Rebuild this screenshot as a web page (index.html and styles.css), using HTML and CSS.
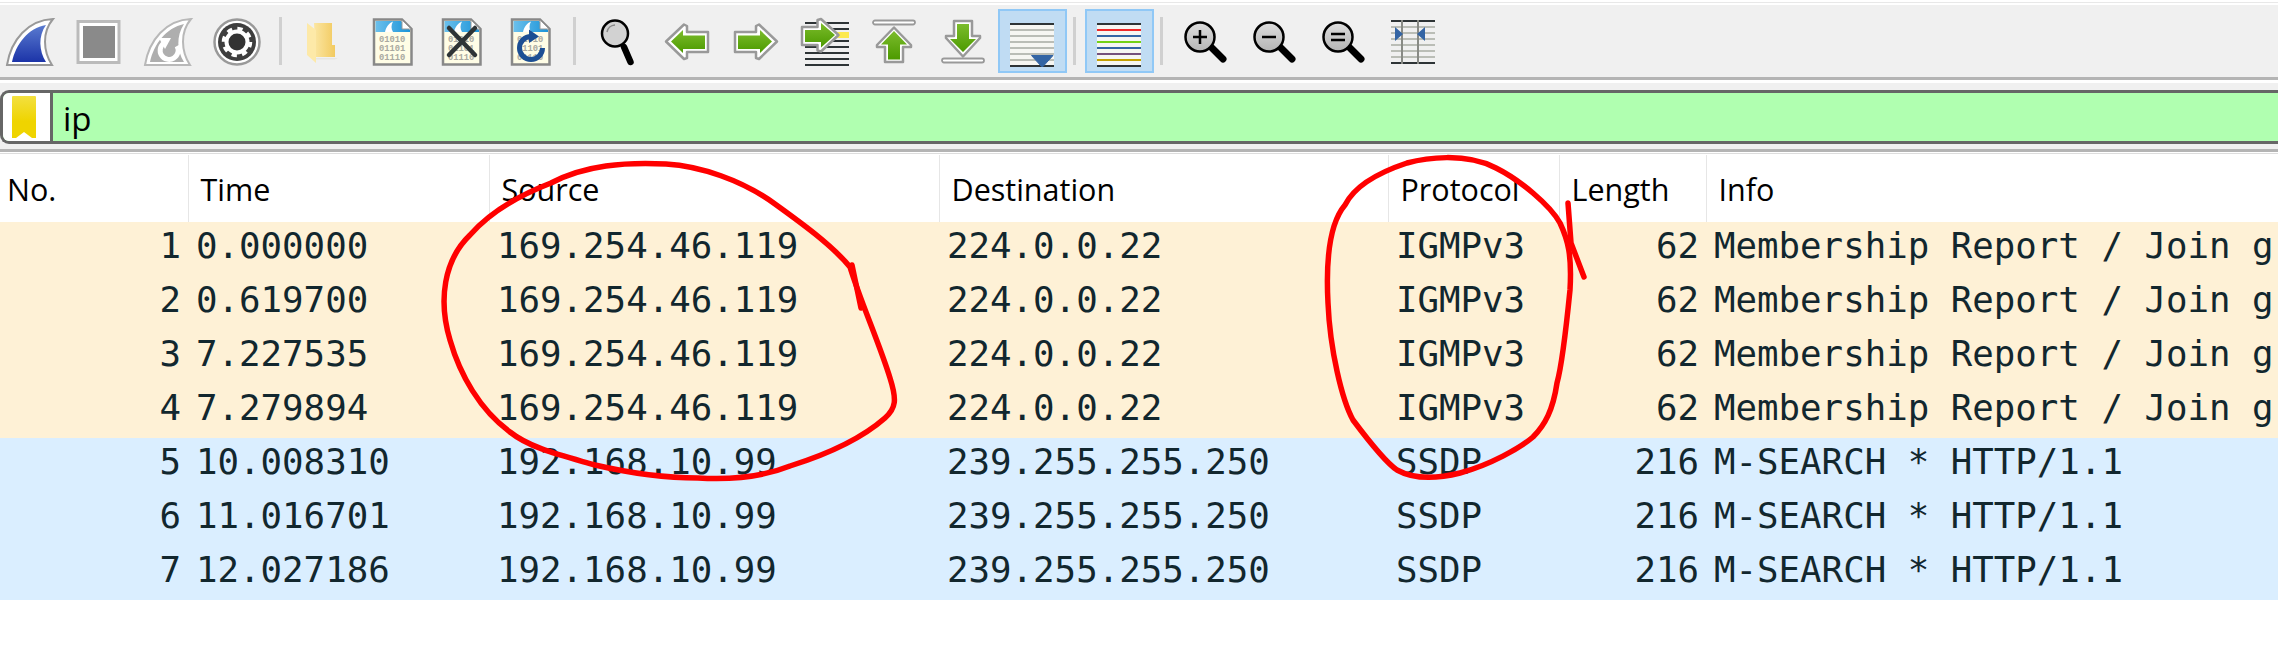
FILE: index.html
```html
<!DOCTYPE html>
<html lang="en">
<head>
  <meta charset="UTF-8" />
  <title>Wireshark capture</title>
  <link rel="stylesheet" href="styles.css">
</head>
<body>
  <svg class="defs" width="0" height="0">
    <defs>
      <linearGradient id="blue-fin" x1="0" y1="0" x2="0" y2="1">
        <stop offset="0" stop-color="#5a7bd0"/>
        <stop offset="1" stop-color="#1c34a8"/>
      </linearGradient>
      <linearGradient id="green-h" x1="0" y1="0" x2="0" y2="1">
        <stop offset="0" stop-color="#7cbc2c"/>
        <stop offset="1" stop-color="#4c9a00"/>
      </linearGradient>
      <linearGradient id="lens" x1="0" y1="0" x2="0" y2="1">
        <stop offset="0" stop-color="#dedede"/>
        <stop offset="1" stop-color="#b4b4b4"/>
      </linearGradient>
      <linearGradient id="folder" x1="0" y1="0" x2="1" y2="0">
        <stop offset="0" stop-color="#fbe6a2"/>
        <stop offset="1" stop-color="#f2ca60"/>
      </linearGradient>
      <linearGradient id="file-top" x1="0" y1="0" x2="1" y2="0">
        <stop offset="0" stop-color="#6cc0ec"/>
        <stop offset="1" stop-color="#1b94d8"/>
      </linearGradient>
      <linearGradient id="mark" x1="0" y1="0" x2="0" y2="1">
        <stop offset="0" stop-color="#f3e040"/>
        <stop offset="0.6" stop-color="#efd400"/>
      </linearGradient>
      <symbol id="capfile" viewBox="0 0 48 48">
        <path d="M6,1.5 H34 L43.5,11 V46.5 H6 Z" fill="#fffde6" stroke="#888" stroke-width="2.5"/>
        <path d="M7.5,3 H33 L42,12 V14 H7.5 Z" fill="url(#file-top)"/>
        <path d="M17,14 C18,9 21,5 25,3.5 C23,7 23,11 25,14 Z" fill="#fff"/>
        <path d="M34,2 V11 H43 Z" fill="#fff" stroke="#999" stroke-width="1"/>
        <text class="bits" x="11" y="24">01010</text>
        <text class="bits" x="11" y="33">01101</text>
        <text class="bits" x="11" y="42">01110</text>
      </symbol>
      <symbol id="lensglass" viewBox="0 0 48 48">
        <path d="M30,30 L41,41" stroke="#000" stroke-width="7" stroke-linecap="round"/>
        <circle cx="18" cy="19" r="14.5" fill="url(#lens)" stroke="#000" stroke-width="2.5"/>
      </symbol>
    </defs>
  </svg>

  <div class="top-line"></div>

  <div class="toolbar">
    <div class="tool first">
      <svg viewBox="0 0 48 48">
        <path d="M47,1 C36,14 37,33 46,47 L1,47 C5,22 22,2 47,1 Z" fill="#fff" stroke="#999" stroke-width="2"/>
        <path d="M40,7 C32,18 33,33 40,44 L6,44 C10,26 22,10 40,7 Z" fill="url(#blue-fin)"/>
      </svg>
    </div>
    <div class="tool">
      <svg viewBox="0 0 48 48">
        <rect x="3" y="3.5" width="41" height="41" fill="#fff" stroke="#bbb" stroke-width="3"/>
        <rect x="8" y="8" width="32" height="32" fill="#8a8a8a"/>
      </svg>
    </div>
    <div class="tool">
      <svg viewBox="0 0 48 48">
        <path d="M47,1 C36,14 37,33 46,47 L1,47 C5,22 22,2 47,1 Z" fill="#fff" stroke="#b8b8b8" stroke-width="2"/>
        <path d="M40,6 C32,18 33,33 40,44 L6,44 C10,26 22,10 40,6 Z" fill="#aeaeae"/>
        <path d="M20,25 A9,9 0 1 0 33,28" fill="none" stroke="#fff" stroke-width="5"/>
        <path d="M15,20 L27,20 L21,31 Z" fill="#fff"/>
      </svg>
    </div>
    <div class="tool">
      <svg viewBox="0 0 48 48">
        <circle cx="24" cy="24" r="22.5" fill="#fff" stroke="#999" stroke-width="2.5"/>
        <circle cx="24" cy="24" r="19" fill="#3e3e3e"/>
        <circle cx="24" cy="24" r="10.5" fill="#333" stroke="#fff" stroke-width="4"/>
        <circle cx="24" cy="24" r="13.5" fill="none" stroke="#fff" stroke-width="3.5" stroke-dasharray="5.3 5.3"/>
      </svg>
    </div>
    <div class="sep"></div>
    <div class="tool">
      <svg viewBox="0 0 48 48">
        <path d="M15,5 H33 V27 H36 V39 H17 Z" fill="url(#folder)"/>
        <path d="M8,5 L17,12 V45 L8,37 Z" fill="#fde9a8"/>
        <path d="M17,40 H39 L36,41.5 H17 Z" fill="#e6e6e2"/>
      </svg>
    </div>
    <div class="tool"><svg viewBox="0 0 48 48"><use href="#capfile"/></svg></div>
    <div class="tool">
      <svg viewBox="0 0 48 48">
        <use href="#capfile"/>
        <path d="M12,10 L38,37 M38,10 L12,37" stroke="#2e3436" stroke-width="4.5" stroke-linecap="round"/>
      </svg>
    </div>
    <div class="tool">
      <svg viewBox="0 0 48 48">
        <use href="#capfile"/>
        <path d="M25,18.5 A11.5,11.5 0 1 0 36.5,30" fill="none" stroke="#1c4f94" stroke-width="5"/>
        <path d="M23,11.5 L33,18.5 L23,25 Z" fill="#1c4f94"/>
      </svg>
    </div>
    <div class="sep wide"></div>
    <div class="tool">
      <svg viewBox="0 0 48 48">
        <path d="M30,29 L36.5,44" stroke="#000" stroke-width="6.5" stroke-linecap="round"/>
        <circle cx="21" cy="15.5" r="13" fill="#d2d2d2" stroke="#000" stroke-width="2.5"/>
        <path d="M13,14 A8.5,8.5 0 0 1 21,7" fill="none" stroke="#888" stroke-width="1.5"/>
      </svg>
    </div>
    <div class="tool">
      <svg viewBox="0 0 48 48">
        <path d="M3,23.5 L21,6.5 L24,8 V14 H45 V34 H24 V40 L21,41 Z" fill="#fff" stroke="#999" stroke-width="2.5" stroke-linejoin="round"/>
        <path d="M8,23.5 L20,12 V17.5 H42 V31 H20 V35 Z" fill="url(#green-h)"/>
      </svg>
    </div>
    <div class="tool">
      <svg viewBox="0 0 48 48">
        <path d="M45,23.5 L27,6.5 L24,8 V14 H3 V34 H24 V40 L27,41 Z" fill="#fff" stroke="#999" stroke-width="2.5" stroke-linejoin="round"/>
        <path d="M40,23.5 L28,12 V17.5 H6 V31 H28 V35 Z" fill="url(#green-h)"/>
      </svg>
    </div>
    <div class="tool">
      <svg viewBox="0 0 48 48">
        <path d="M4,5 H48 M4,11 H48 M4,23 H48 M4,29 H48 M4,35 H48 M4,41 H48 M4,47 H48" stroke="#2e3436" stroke-width="2"/>
        <rect x="36" y="14" width="12" height="6" fill="#fce94f"/>
        <path d="M37.5,17 L20,1 L16.5,2 V9 H1 V27 H16.5 V32.5 L20,33.5 Z" fill="#fff" stroke="#999" stroke-width="2.5" stroke-linejoin="round"/>
        <path d="M34,17 L20,5 V12 H4 V24 H20 V29.5 Z" fill="url(#green-h)"/>
      </svg>
    </div>
    <div class="tool">
      <svg viewBox="0 0 48 48">
        <rect x="3" y="2.5" width="42" height="4" rx="2" fill="#fff" stroke="#999" stroke-width="1.8"/>
        <path d="M24,9.5 L41,27 V29 H33 V44 H15 V29 H7 V27 Z" fill="#fff" stroke="#999" stroke-width="2.5" stroke-linejoin="round"/>
        <path d="M24,13 L37,26.5 H30 V41.5 H18 V26.5 H11 Z" fill="url(#green-h)"/>
      </svg>
    </div>
    <div class="tool">
      <svg viewBox="0 0 48 48">
        <path d="M15,3 H33 V18 H41 V20 L24,38.5 L7,20 V18 H15 Z" fill="#fff" stroke="#999" stroke-width="2.5" stroke-linejoin="round"/>
        <path d="M18,6 H30 V21 H37 L24,34 L11,21 H18 Z" fill="url(#green-h)"/>
        <rect x="3" y="40.5" width="42" height="4" rx="2" fill="#fff" stroke="#999" stroke-width="1.8"/>
      </svg>
    </div>
    <div class="tool on">
      <svg viewBox="0 0 48 48">
        <rect x="2" y="6" width="44" height="42" fill="#f6f6f2"/>
        <path d="M2,12 H46 M2,18 H46 M2,24 H46 M2,30 H46 M2,36 H46 M2,42 H46" stroke="#babdb6" stroke-width="2"/>
        <path d="M2,6 H46 M2,48 H46" stroke="#2e3436" stroke-width="2"/>
        <path d="M23.5,37.5 H45 L35,48.5 H33.5 Z" fill="#3465a4" stroke="#3465a4" stroke-linejoin="round"/>
      </svg>
    </div>
    <div class="sep tight"></div>
    <div class="tool on">
      <svg viewBox="0 0 48 48">
        <rect x="2" y="6" width="44" height="42" fill="#f6f6f2"/>
        <path d="M2,6 H46 M2,48 H46" stroke="#2e3436" stroke-width="2"/>
        <path d="M2,12 H46" stroke="#ef2929" stroke-width="2"/>
        <path d="M2,18 H46" stroke="#3465a4" stroke-width="2"/>
        <path d="M2,24 H46" stroke="#73d216" stroke-width="2"/>
        <path d="M2,30 H46" stroke="#3465a4" stroke-width="2"/>
        <path d="M2,36 H46" stroke="#75507b" stroke-width="2"/>
        <path d="M2,42 H46" stroke="#c4a000" stroke-width="2"/>
      </svg>
    </div>
    <div class="sep tight"></div>
    <div class="tool">
      <svg viewBox="0 0 48 48">
        <use href="#lensglass"/>
        <path d="M11,19 H25 M18,12 V26" stroke="#000" stroke-width="2.5"/>
      </svg>
    </div>
    <div class="tool">
      <svg viewBox="0 0 48 48">
        <use href="#lensglass"/>
        <path d="M11,19 H25" stroke="#000" stroke-width="2.5"/>
      </svg>
    </div>
    <div class="tool">
      <svg viewBox="0 0 48 48">
        <use href="#lensglass"/>
        <path d="M11,16 H25 M11,22 H25" stroke="#000" stroke-width="2.5"/>
      </svg>
    </div>
    <div class="tool">
      <svg viewBox="0 0 48 48">
        <path d="M2,9 H46 M2,15 H46 M2,21 H46 M2,27 H46 M2,33 H46 M2,39 H46" stroke="#babdb6" stroke-width="2"/>
        <path d="M2,3 H46 M2,45 H46" stroke="#2e3436" stroke-width="2"/>
        <path d="M13,2 V46 M29,2 V46" stroke="#888a85" stroke-width="2"/>
        <path d="M6,9 L14,16 L6,23 Z M36,9 L28,16 L36,23 Z" fill="#3465a4"/>
      </svg>
    </div>
  </div>

  <div class="filter-wrap">
    <div class="filter">
      <div class="mark-cell">
        <svg class="mark" viewBox="0 0 24 42"><path d="M0,1 Q0,0 1,0 H23 Q24,0 24,1 V42 H20 L12,36 L4,42 H0 Z" fill="url(#mark)"/></svg>
      </div>
      <div class="filter-text">ip</div>
    </div>
  </div>
  <div class="head-rule"></div>

  <table class="packets">
    <colgroup>
      <col class="c-no"><col class="c-time"><col class="c-src"><col class="c-dst"><col class="c-proto"><col class="c-len"><col>
    </colgroup>
    <thead>
      <tr><th>No.</th><th>Time</th><th>Source</th><th>Destination</th><th>Protocol</th><th>Length</th><th>Info</th></tr>
    </thead>
    <tbody>
      <tr class="igmp"><td class="num">1</td><td>0.000000</td><td>169.254.46.119</td><td>224.0.0.22</td><td>IGMPv3</td><td class="num">62</td><td>Membership Report / Join group 224.0.0.22 for any sources</td></tr>
      <tr class="igmp"><td class="num">2</td><td>0.619700</td><td>169.254.46.119</td><td>224.0.0.22</td><td>IGMPv3</td><td class="num">62</td><td>Membership Report / Join group 224.0.0.22 for any sources</td></tr>
      <tr class="igmp"><td class="num">3</td><td>7.227535</td><td>169.254.46.119</td><td>224.0.0.22</td><td>IGMPv3</td><td class="num">62</td><td>Membership Report / Join group 224.0.0.22 for any sources</td></tr>
      <tr class="igmp"><td class="num">4</td><td>7.279894</td><td>169.254.46.119</td><td>224.0.0.22</td><td>IGMPv3</td><td class="num">62</td><td>Membership Report / Join group 224.0.0.22 for any sources</td></tr>
      <tr class="ssdp"><td class="num">5</td><td>10.008310</td><td>192.168.10.99</td><td>239.255.255.250</td><td>SSDP</td><td class="num">216</td><td>M-SEARCH * HTTP/1.1</td></tr>
      <tr class="ssdp"><td class="num">6</td><td>11.016701</td><td>192.168.10.99</td><td>239.255.255.250</td><td>SSDP</td><td class="num">216</td><td>M-SEARCH * HTTP/1.1</td></tr>
      <tr class="ssdp"><td class="num">7</td><td>12.027186</td><td>192.168.10.99</td><td>239.255.255.250</td><td>SSDP</td><td class="num">216</td><td>M-SEARCH * HTTP/1.1</td></tr>
    </tbody>
  </table>

  <!-- hand drawn red circles on top of the screenshot -->
  <svg class="scribble" viewBox="0 0 2278 647">
    <path d="M551,183 C585,165 625,162 666,164 C700,166 742,180 775,204 C800,222 832,245 850,267 C860,300 880,345 890,378 C897,400 896,408 885,418 C860,440 825,455 790,466 C760,478 730,480 698,478 C660,478 625,472 595,465 C560,455 530,448 510,432 C480,410 460,375 450,340 C438,300 444,260 470,235 C490,212 520,195 551,183 Z"/>
    <path d="M852,265 L861,308"/>
    <path d="M1407,163 C1425,158 1465,152 1496,168 C1520,180 1550,205 1560,223 C1568,240 1572,255 1570,290 C1566,330 1562,365 1557,383 C1553,410 1545,425 1533,437 C1520,448 1490,465 1460,473 C1440,478 1415,480 1397,470 C1385,462 1368,440 1353,420 C1342,400 1330,350 1328,303 C1326,265 1328,225 1345,205 C1355,185 1380,172 1407,163 Z"/>
    <path d="M1568,203 L1571,243 L1584,277"/>
  </svg>
</body>
</html>
```

FILE: styles.css
```css
body {
  margin: 0;
  background: #fff;
  font-family: "Open Sans", "Liberation Sans", sans-serif;
  overflow: hidden;
}
.defs {
  position: absolute;
}
.bits {
  font-family: "Liberation Mono", monospace;
  font-size: 8.8px;
  font-weight: bold;
  fill: #a9a9a0;
}
.top-line {
  height: 1px;
  margin: 2px 0;
  background: #e8e8e8;
}
.toolbar {
  display: flex;
  align-items: center;
  height: 72px;
  background: #f0f0f0;
  border-bottom: 3px solid #b4b4b4;
}
.tool {
  box-sizing: border-box;
  display: flex;
  align-items: center;
  justify-content: center;
  flex: none;
  width: 69px;
  height: 64px;
  padding-top: 2px;
}
.tool svg {
  width: 48px;
  height: 48px;
  overflow: visible;
}
.tool.first {
  width: 64.5px;
  padding-right: 4.5px;
}
.tool.on {
  background: #c0dcf3;
  border: 2px solid #90c8f6;
}
.sep {
  flex: none;
  width: 3px;
  height: 48px;
  margin: 0 7px;
  background: #d0d0d0;
}
.sep.wide {
  margin: 0 8px;
}
.sep.tight {
  margin: 0 9px 0 6px;
}
.filter-wrap {
  margin-top: 3px;
  padding: 7px 0 5px;
  background: #f0f0f0;
  border-bottom: 3px solid #b4b4b4;
}
.filter {
  box-sizing: border-box;
  display: flex;
  height: 54px;
  border: 3px solid #666;
  border-right: none;
  border-radius: 9px 0 0 9px;
  background: #b0ffb0;
  overflow: hidden;
}
.mark-cell {
  box-sizing: border-box;
  display: flex;
  align-items: center;
  width: 50px;
  padding-left: 9px;
  background: #fff;
  border-right: 3px solid #666;
}
.mark {
  width: 24px;
  height: 42px;
}
.filter-text {
  padding: 2px 0 0 10px;
  font-size: 33px;
  line-height: 47px;
  color: #000;
}
.head-rule {
  height: 1px;
  margin-top: 1px;
  background: #ddd;
}
.packets {
  width: 2278px;
  table-layout: fixed;
  border-collapse: collapse;
  margin-top: 1px;
}
.c-no { width: 188px; }
.c-time { width: 301px; }
.c-src { width: 450px; }
.c-dst { width: 449px; }
.c-proto { width: 171px; }
.c-len { width: 147px; }
.packets th {
  height: 67px;
  padding: 0 0 0 12px;
  border-right: 1px solid #e6e6e6;
  font-size: 30.5px;
  font-weight: 400;
  text-align: left;
  color: #000;
  white-space: nowrap;
  overflow: hidden;
}
.packets th:first-child {
  padding-left: 7px;
}
.packets th:last-child {
  border-right: none;
}
.packets td {
  height: 54px;
  padding: 0 0 6px 8px;
  box-sizing: border-box;
  font-family: "DejaVu Sans Mono", monospace;
  font-size: 35.75px;
  line-height: 46px;
  color: #12272e;
  white-space: nowrap;
  overflow: hidden;
}
.packets td.num {
  padding-left: 0;
  padding-right: 7px;
  text-align: right;
}
.igmp {
  background: #fef1d6;
}
.ssdp {
  background: #daeeff;
}
.scribble {
  position: absolute;
  left: 0;
  top: 0;
  width: 2278px;
  height: 647px;
  fill: none;
  stroke: #f00;
  stroke-width: 5.5;
  stroke-linecap: round;
  stroke-linejoin: round;
  pointer-events: none;
}
```
